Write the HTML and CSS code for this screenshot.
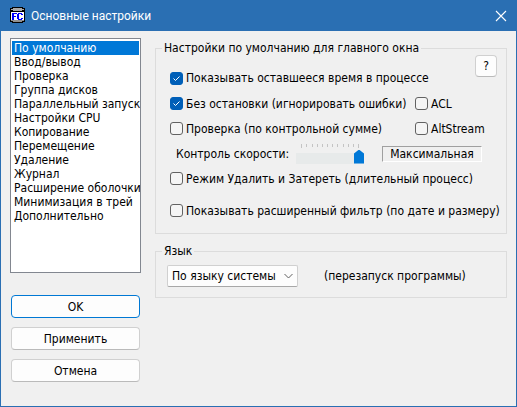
FILE: index.html
```html
<!DOCTYPE html>
<html lang="ru">
    <head>
        <meta charset="utf-8">
        <title>Основные настройки</title>
        <link rel="stylesheet" href="styles.css">
    </head>

    <body>
        <form class="window">
            <header class="titlebar">
                <svg class="app-icon" width="17" height="17" viewBox="0 0 17 17" shape-rendering="crispEdges">
                    <path fill="#000" d="M3 0h11v1h2v14h-2v1H3v-1H1V1h2z"/>
                    <path fill="#a8a8a8" d="M4 1h9v1h2v1h-2v1H4V3H2V2h2z"/>
                    <path fill="#909090" d="M2 12h13v2h-2v1H4v-1H2z"/>
                    <path fill="#fff" d="M2 5h13v8H2z"/>
                    <path fill="#00f" d="M3 6h5v1H5v2h2v1H5v3H3z"/>
                    <path fill="#00f" d="M9 6h4v1h1v1h-2V7h-2v5h2v-1h2v1h-1v1H9v-1H8V7h1z"/>
                </svg>
                <h1 class="title">Основные настройки</h1>
                <button type="button" class="close" aria-label="Закрыть">
                    <svg width="12" height="12" viewBox="0 0 12 12"><path d="M1 1l10 10M11 1L1 11" stroke="#fff" stroke-width="1.1"/></svg>
                </button>
            </header>

            <main class="content">
                <div class="sidebar">
                    <select class="sections" size="16" aria-label="Разделы">
                        <option selected>По умолчанию</option>
                        <option>Ввод/вывод</option>
                        <option>Проверка</option>
                        <option>Группа дисков</option>
                        <option>Параллельный запуск</option>
                        <option>Настройки CPU</option>
                        <option>Копирование</option>
                        <option>Перемещение</option>
                        <option>Удаление</option>
                        <option>Журнал</option>
                        <option>Расширение оболочки</option>
                        <option>Минимизация в трей</option>
                        <option>Дополнительно</option>
                    </select>
                    <div class="buttons">
                        <button type="submit" class="button default">OK</button>
                        <button type="button" class="button">Применить</button>
                        <button type="button" class="button">Отмена</button>
                    </div>
                </div>

                <div class="panel">
                    <fieldset class="group">
                        <legend>Настройки по умолчанию для главного окна</legend>
                        <div class="row first">
                            <label class="check"><input type="checkbox" checked>Показывать оставшееся время в процессе</label>
                            <button type="button" class="button help">?</button>
                        </div>
                        <div class="row pair">
                            <label class="check"><input type="checkbox" checked>Без остановки (игнорировать ошибки)</label>
                            <label class="check"><input type="checkbox">ACL</label>
                        </div>
                        <div class="row pair">
                            <label class="check"><input type="checkbox">Проверка (по контрольной сумме)</label>
                            <label class="check"><input type="checkbox">AltStream</label>
                        </div>
                        <div class="row speed">
                            <label for="speed">Контроль скорости:</label>
                            <div class="slider">
                                <svg class="ticks" width="68" height="4" viewBox="0 0 68 4" shape-rendering="crispEdges">
                                    <path stroke="#c4c4c4" d="M5.5 0v4M10.5 0v3M16.5 0v3M21.5 0v3M26.5 0v3M31.5 0v3M36.5 0v3M41.5 0v3M47.5 0v3M52.5 0v3M57.5 0v3M62.5 0v4"/>
                                </svg>
                                <input type="range" id="speed" min="0" max="11" value="11">
                            </div>
                            <output class="speed-value" for="speed">Максимальная</output>
                        </div>
                        <div class="row">
                            <label class="check"><input type="checkbox">Режим Удалить и Затереть (длительный процесс)</label>
                        </div>
                        <div class="row last">
                            <label class="check"><input type="checkbox">Показывать расширенный фильтр (по дате и размеру)</label>
                        </div>
                    </fieldset>

                    <fieldset class="group language">
                        <legend>Язык</legend>
                        <div class="lang-row">
                            <select class="lang" aria-label="Язык">
                                <option>По языку системы</option>
                            </select>
                            <span>(перезапуск программы)</span>
                        </div>
                    </fieldset>
                </div>
            </main>
        </form>
    </body>
</html>
```

FILE: styles.css
```css
* {
    box-sizing: border-box;
}
body {
    margin: 0;
    font: 12px/14px "DejaVu Sans Condensed", "DejaVu Sans", sans-serif;
    color: #000;
    background-color: #f0f0f0;
}
button, select, input {
    font: inherit;
    color: inherit;
    margin: 0;
}
.window {
    display: flex;
    flex-direction: column;
    min-height: 100vh;
    border: 1px solid #2a6fb3;
    border-top: none;
}
.titlebar {
    display: flex;
    align-items: center;
    gap: 5px;
    height: 31px;
    padding: 0 9px 0 8px;
    background-color: #2a6fb3;
}
.title {
    flex: 1;
    margin: 0;
    font: 12px/16px Roboto, "Noto Sans", sans-serif;
    color: #fff;
}
.close {
    display: flex;
    padding: 0;
    border: none;
    background: none;
}
.content {
    display: flex;
    flex: 1;
    gap: 14px;
    padding: 7px 9px;
}
.sidebar {
    flex: 0 0 131px;
}
.sections {
    display: block;
    width: 100%;
    height: 235px;
    padding: 2px 1px;
    border: 1px solid #828790;
    border-radius: 0;
    outline: none;
    background-color: #fff;
    overflow: hidden;
}
.sections option {
    min-height: 14px;
    padding: 0 2px;
    line-height: 14px;
}
.sections option:checked {
    background: linear-gradient(#0078d7, #0078d7);
    -webkit-text-fill-color: #fff;
}
.buttons {
    display: flex;
    flex-direction: column;
    gap: 9px;
    padding: 22px 1px 0;
}
.button {
    height: 22px;
    padding: 0;
    border: 1px solid #d0d0d0;
    border-bottom-color: #bababa;
    border-radius: 4px;
    background-color: #fdfdfd;
}
.buttons .button {
    height: 23px;
}
.buttons .default {
    border-color: #0078d4;
}
.panel {
    flex: 1;
    min-width: 0;
    padding-top: 3px;
}
.group {
    min-width: 0;
    margin: 0 0 10px;
    padding: 0 9px 10px 8px;
    border: 1px solid #dcdcdc;
}
.group legend {
    padding: 0 2px;
    margin-left: -2px;
}
.row {
    display: flex;
    align-items: center;
    height: 25px;
    padding-left: 6px;
    white-space: nowrap;
}
.first {
    height: 36px;
    align-items: flex-start;
    justify-content: space-between;
}
.first .check {
    margin-top: 16px;
}
.last {
    margin-top: 7px;
}
.help {
    width: 22px;
}
.pair {
    display: grid;
    grid-template-columns: 245px 1fr;
}
.check {
    display: flex;
    align-items: center;
    gap: 3px;
}
.check input {
    appearance: none;
    width: 13px;
    height: 13px;
    border: 1px solid #626262;
    border-radius: 3px;
    background-color: #f5f5f5;
}
.check input:checked {
    border-color: #005fb8;
    background: #005fb8 url("data:image/svg+xml,%3Csvg xmlns='http://www.w3.org/2000/svg' viewBox='0 0 11 11'%3E%3Cpath d='M2.5 5.5l2 2 4-4' fill='none' stroke='%23fff'/%3E%3C/svg%3E") center / 11px 11px no-repeat;
}
.speed {
    padding-left: 12px;
}
.speed label {
    width: 120px;
}
.slider {
    width: 68px;
    margin-right: 18px;
}
.ticks {
    display: block;
    margin-bottom: 2px;
}
.slider input {
    appearance: none;
    display: block;
    width: 100%;
    height: 14px;
    background: linear-gradient(#e7eaea, #e7eaea) 0 3px / 100% 11px no-repeat;
}
.slider input::-webkit-slider-thumb {
    appearance: none;
    width: 10px;
    height: 14px;
    background-color: #0078d7;
    clip-path: polygon(50% 0, 100% 4px, 100% 100%, 0 100%, 0 4px);
}
.speed-value {
    width: 100px;
    height: 16px;
    line-height: 15px;
    text-align: center;
    border: 1px solid;
    border-color: #a0a0a0 #fff #fff #a0a0a0;
}
.language {
    padding: 0 9px 10px 11px;
}
.language legend {
    margin-left: -5px;
}
.lang-row {
    display: flex;
    align-items: center;
    gap: 26px;
    padding-top: 7px;
}
.lang {
    appearance: none;
    width: 131px;
    height: 22px;
    padding: 0 20px 0 4px;
    border: 1px solid #d0d0d0;
    border-bottom-color: #a8a8a8;
    border-radius: 2px;
    background: #fdfdfd url("data:image/svg+xml,%3Csvg xmlns='http://www.w3.org/2000/svg' viewBox='0 0 9 6'%3E%3Cpath d='M.5 1l4 4 4-4' fill='none' stroke='%23606060'/%3E%3C/svg%3E") right 4px center / 9px 6px no-repeat;
}
```
